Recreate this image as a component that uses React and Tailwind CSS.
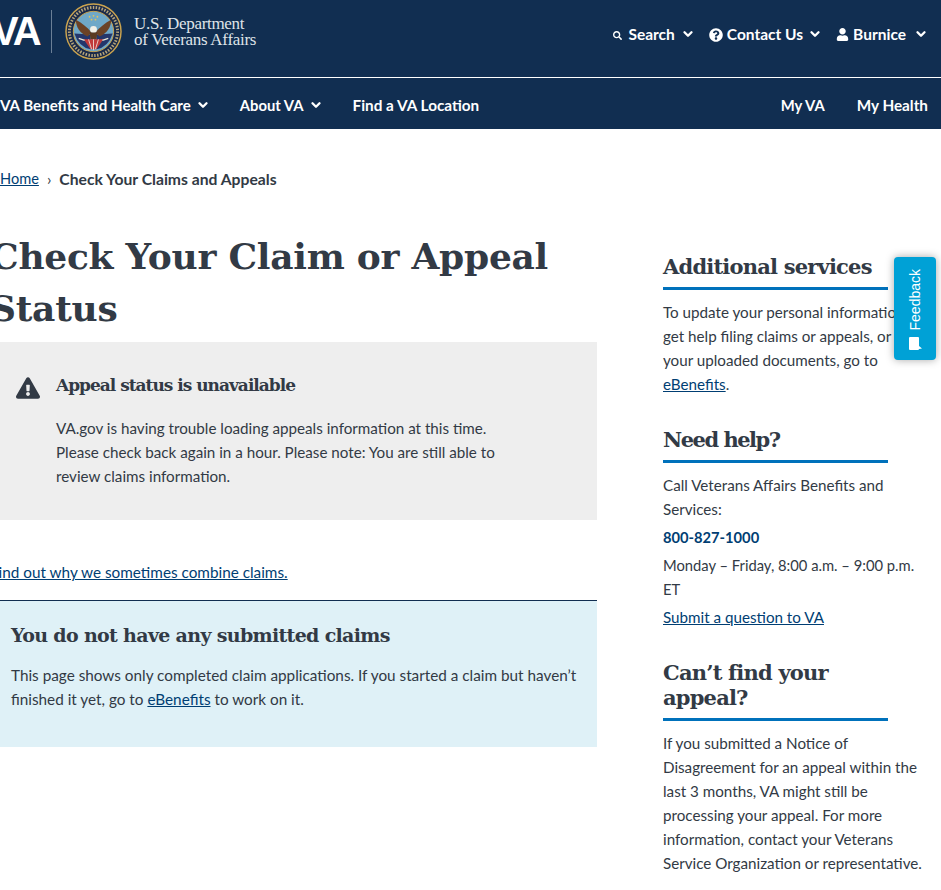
import React from 'react';
import { ChevronDown } from 'lucide-react';
import { FaSearch, FaQuestionCircle, FaUser, FaExclamationTriangle } from 'react-icons/fa';

const serif = 'font-["DejaVu_Serif",serif]';

function Seal() {
  return (
    <svg width="57" height="57" viewBox="0 0 58 58" className="shrink-0">
      <circle cx="29" cy="29" r="28" fill="#1a2a4a" stroke="#c9a34f" strokeWidth="1.5" />
      <circle cx="29" cy="29" r="20.5" fill="#6fa8c8" stroke="#c9a34f" strokeWidth="1" />
      <circle cx="29" cy="29" r="24.5" fill="none" stroke="#b9a77a" strokeWidth="3" strokeDasharray="1.5 1.5" />
      <path d="M9.5 31 L26 32 L26 47 Q14 45 9.5 31Z" fill="#24366b" />
      <path d="M48.5 31 L32 32 L32 47 Q44 45 48.5 31Z" fill="#24366b" />
      <path d="M27 30 C23 25 17 20 11 17 C11 24 15 31 23 34Z" fill="#6b4226" />
      <path d="M31 30 C35 25 41 20 47 17 C47 24 43 31 35 34Z" fill="#6b4226" />
      <circle cx="29" cy="27" r="3.5" fill="#f2f0e8" />
      <path d="M25 30 H33 L32 37 H26Z" fill="#5a3a22" />
      <path d="M19 37 H39 L32 47 H26Z" fill="#c23a3a" />
      <path d="M24 37 L27 47 M29 37 V48 M34 37 L31 47" stroke="#f2f0e8" strokeWidth="0.8" />
      <path d="M20 38 L14 36 M38 38 L44 36" stroke="#e8e4d4" strokeWidth="1.5" />
      <circle cx="25" cy="14" r="0.9" fill="#e0c060" />
      <circle cx="29" cy="13" r="0.9" fill="#e0c060" />
      <circle cx="33" cy="14" r="0.9" fill="#e0c060" />
      <circle cx="27" cy="17" r="0.9" fill="#e0c060" />
      <circle cx="31" cy="17" r="0.9" fill="#e0c060" />
    </svg>
  );
}

function Chevron({ className = '' }) {
  return <ChevronDown size={14} strokeWidth={4} className={`text-white shrink-0 ${className}`} />;
}

function Header() {
  return (
    <header className="bg-[#112e51] text-white font-['Lato',sans-serif] font-bold">
      <div className="h-[77px] flex items-center justify-between pr-[13px]">
        <div className="flex items-center h-full -mt-[15px]">
          <span className="-ml-[8px] w-[48px] font-['Liberation_Sans',sans-serif] text-[40px] leading-none tracking-[-3px] font-bold">VA</span>
          <span className="ml-[11px] w-px h-[43px] bg-[#6b7f96]" />
          <span className="ml-[13px]"><Seal /></span>
          <span className="ml-[12px] mt-[2px] font-['Liberation_Serif',serif] font-normal text-[17px] tracking-[-0.3px] leading-[16px] text-[#dfe3e8]">
            U.S. Department<br />of Veterans Affairs
          </span>
        </div>
        <div className="flex items-center text-[15.5px] -mt-[7px]">
          <span className="flex items-center"><FaSearch size={9} className="mr-[6px]" />Search<Chevron className="ml-[6px] -mt-[3px]" /></span>
          <span className="flex items-center ml-[14px]"><FaQuestionCircle size={14} className="mr-[4px]" />Contact Us<Chevron className="ml-[5px] -mt-[3px]" /></span>
          <span className="flex items-center ml-[14px]"><FaUser size={13} className="mr-[4px] -mt-[2px]" />Burnice<Chevron className="ml-[8px] -mt-[3px]" /></span>
        </div>
      </div>
      <div className="h-px bg-white" />
      <nav className="h-[51px] flex items-center justify-between pr-[13px] pt-[3px] text-[15.3px] leading-[24px]">
        <div className="flex items-center">
          <span className="flex items-center gap-[5px] text-[15.1px]">VA Benefits and Health Care<Chevron /></span>
          <span className="flex items-center gap-[5px] ml-[30px] text-[14.8px]">About VA<Chevron /></span>
          <span className="ml-[30px]">Find a VA Location</span>
        </div>
        <div className="flex items-center gap-[32px]">
          <span className="text-[14.8px]">My VA</span>
          <span>My Health</span>
        </div>
      </nav>
    </header>
  );
}

function SideHeading({ children, className = 'tracking-[-0.8px]' }) {
  return (
    <div className={`${serif} ${className} font-bold text-[21px] leading-[25px] pt-[1px] pb-[8px] mb-[10px] w-[225px] border-b-[3px] border-[#0071bb] text-[#323a45]`}>
      {children}
    </div>
  );
}

function Sidebar() {
  return (
    <aside className="w-[262px] mt-[22px] shrink-0 text-[15.2px] leading-[24px] text-[#323a45]">
      <SideHeading>Additional services</SideHeading>
      <p className="whitespace-nowrap">To update your personal information,<br />get help filing claims or appeals, or view<br />your uploaded documents, go to<br /><a className="underline text-[#003e73]">eBenefits</a>.</p>
      <div className="mt-[30px]"><SideHeading className="tracking-[-1.5px]">Need help?</SideHeading></div>
      <p className="w-[225px] mt-[1px]">Call Veterans Affairs Benefits and Services:</p>
      <p className="mt-[4px] font-bold text-[14.7px] text-[#003e73]">800-827-1000</p>
      <p className="mt-[4px] text-[14.75px]">Monday – Friday, 8:00 a.m. – 9:00 p.m. ET</p>
      <p className="mt-[4px]"><a className="underline text-[#003e73]">Submit a question to VA</a></p>
      <div className="mt-[30px]"><SideHeading>Can’t find your appeal?</SideHeading></div>
      <p>If you submitted a Notice of<br />Disagreement for an appeal within the<br />last 3 months, VA might still be<br />processing your appeal. For more<br />information, contact your Veterans<br />Service Organization or representative.</p>
    </aside>
  );
}

function Main() {
  return (
    <div className="w-[607px] -ml-[10px] shrink-0 text-[15.2px] leading-[24px] text-[#323a45]">
      <h1 className={`${serif} font-bold text-[36px] tracking-[-0.27px] leading-[52px] mt-[-1px]`}>Check Your Claim or Appeal Status</h1>
      <div className="mt-[8px] h-[178px] bg-[#eeeeee] flex pt-[30px]">
        <FaExclamationTriangle size={24} className="ml-[26px] mt-[4px] shrink-0 text-[#323a45]" />
        <div className="ml-[16px] w-[460px]">
          <h3 className={`${serif} font-bold text-[17px] tracking-[-1px] leading-[26px]`}>Appeal status is unavailable</h3>
          <p className="mt-[18px]">VA.gov is having trouble loading appeals information at this time. Please check back again in a hour. Please note: You are still able to review claims information.</p>
        </div>
      </div>
      <p className="mt-[40px] text-[15.3px]"><a className="underline text-[#003e73]">Find out why we sometimes combine claims.</a></p>
      <div className="mt-[16px] border-t border-[#112e51] bg-[#dff1f7] h-[147px] pl-[21px] pr-[10px] pt-[20px]">
        <h3 className={`${serif} font-bold text-[19px] tracking-[-0.67px] leading-[28px]`}>You do not have any submitted claims</h3>
        <p className="mt-[14px] text-[15.3px]">This page shows only completed claim applications. If you started a claim but haven’t finished it yet, go to <a className="underline text-[#003e73]">eBenefits</a> to work on it.</p>
      </div>
    </div>
  );
}

export default function App() {
  return (
    <div className="relative w-[941px] h-[890px] overflow-hidden bg-white font-['Lato',sans-serif]">
      <Header />
      <div className="pt-[38px] pb-[1px] text-[15.7px] leading-[24px] text-[#323a45] flex items-center gap-[8px]">
        <a className="underline text-[14.6px] text-[#003e73]">Home</a>
        <span>›</span>
        <span className="font-bold">Check Your Claims and Appeals</span>
      </div>
      <div className="mt-[39px] flex gap-[66px]">
        <Main />
        <Sidebar />
      </div>
      <button className="absolute left-[894px] top-[257px] w-[42px] h-[103px] rounded-[4px] bg-[#00a1d6] shadow-[0_0_8px_rgba(0,0,0,0.35)] text-white flex flex-col-reverse items-center justify-start gap-[7px] pb-[10px] pr-[1px] font-['Liberation_Sans',sans-serif]">
        <svg width="13" height="13" viewBox="0 0 13 13" fill="white" className="ml-[2px]"><path d="M0 1 Q0 0 1 0 H9 Q10 0 10 1 V9 L13 11.5 L10 12 Q10 13 9 13 H1 Q0 13 0 12Z" /></svg>
        <span className="[writing-mode:vertical-rl] rotate-180 text-[14px] leading-none">Feedback</span>
      </button>
    </div>
  );
}
